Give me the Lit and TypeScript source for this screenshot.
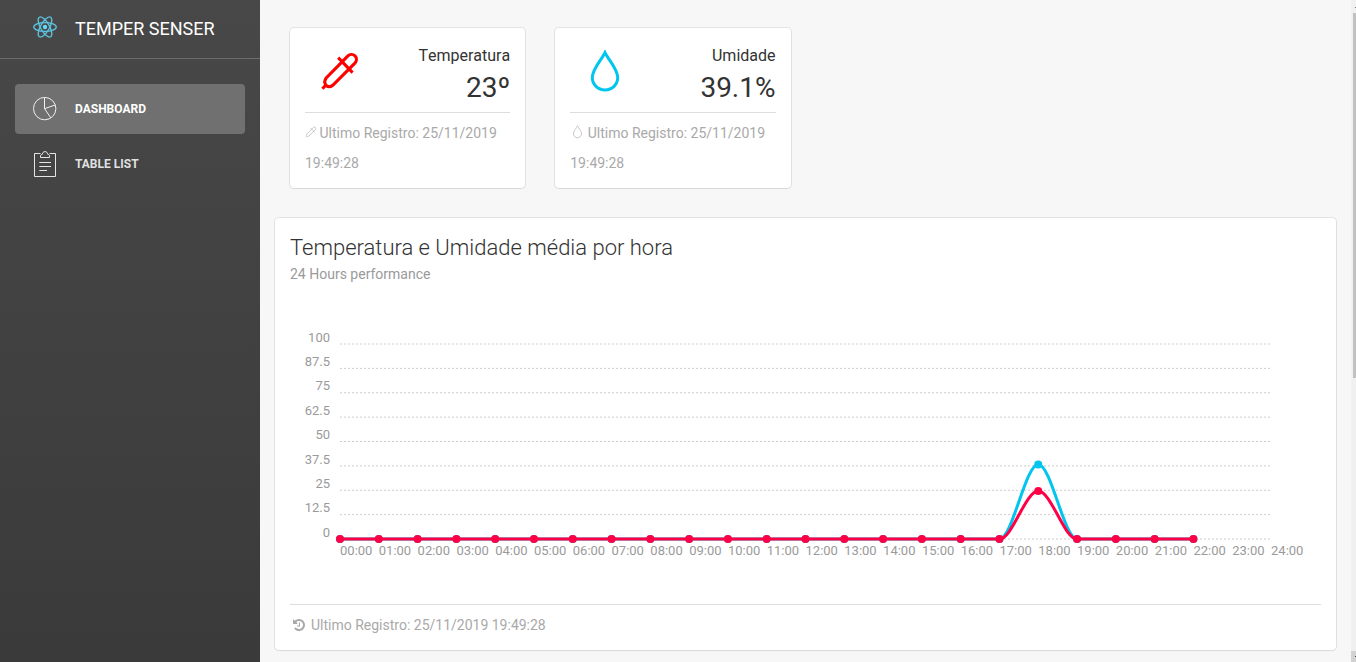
import { LitElement, html, css, svg } from "lit";
import { customElement, property } from "lit/decorators.js";

const STAMP = "Ultimo Registro: 25/11/2019 19:49:28";

const eyedropper = (stroke: number) => svg`
  <g fill="none" stroke="currentColor" stroke-width=${stroke} stroke-linecap="butt">
    <path d="M2.4 37.8 5.6 34.4"/>
    <path d="M6.2 34.4C4.6 32.6 4.3 29.6 6.2 27L27.7 5.2C29.8 3 33 3 35 4.9C37 6.9 36.9 10 34.9 12.1L13 34C10.6 36 8 36.2 6.2 34.4Z"/>
    <path d="M18.2 6.6 32.6 21.6"/>
  </g>`;

const drop = (stroke: number) => svg`
  <path fill="none" stroke="currentColor" stroke-width=${stroke}
    d="M20 2.6C17.2 9 7.3 18.8 7.3 27.6C7.3 34.6 12.9 40 20 40S32.7 34.6 32.7 27.6C32.7 18.8 22.8 9 20 2.6Z"/>`;

@customElement("stat-card")
class StatCard extends LitElement {
  @property() kind = "temp";
  @property() label = "";
  @property() value = "";

  static styles = css`
    :host { display: block; }
    .card {
      height: 160px;
      box-sizing: border-box;
      padding: 15px 15px 0;
      background: #fff;
      border-radius: 4px;
      box-shadow: 0 1px 2px rgba(0, 0, 0, 0.05), 0 0 0 1px rgba(63, 63, 68, 0.1);
    }
    .top { display: flex; justify-content: space-between; height: 69px; }
    .big { width: 40px; height: 44px; margin: 7px 0 0 15px; }
    .big.temp { margin-top: 8px; }
    .temp { color: #f00; }
    .hum { color: #00c5ee; }
    .nums { text-align: right; color: #333; }
    .label { font-size: 16px; line-height: 24px; padding-top: 1px; font-kerning: none; }
    .value { font-size: 28px; line-height: 36px; padding-top: 2px; }
    .foot {
      border-top: 1px solid #ddd;
      padding-top: 5px;
      font-size: 14px;
      line-height: 30px;
      color: #a9a9a9;
    }
    .small { width: 12px; height: 13px; margin-right: 2.5px; vertical-align: -1px; }
    .small.drop { margin: 0 3.5px 0 1px; width: 13px; height: 14px; }
  `;

  render() {
    const temp = this.kind === "temp";
    return html`<div class="card">
      <div class="top">
        <svg class="big ${temp ? "temp" : "hum"}" viewBox="0 0 40 44">${temp ? eyedropper(3.1) : drop(3)}</svg>
        <div class="nums">
          <div class="label">${this.label}</div>
          <div class="value">${this.value}</div>
        </div>
      </div>
      <div class="foot">
        <svg class="small ${temp ? "" : "drop"}" viewBox="0 0 40 44">${temp ? eyedropper(2) : drop(2)}</svg>${STAMP}
      </div>
    </div>`;
  }
}

@customElement("hour-chart")
class HourChart extends LitElement {
  static styles = css`
    :host { display: block; }
    .plot { display: block; width: 1031px; height: 245px; }
    .tick { font-size: 13px; fill: #9a9a9a; }
    .grid { stroke: rgba(0, 0, 0, 0.2); stroke-width: 1; stroke-dasharray: 2 2; }
    .line { fill: none; stroke-width: 3; }
  `;

  private x0 = 50;
  private dx = 931 / 24;
  private yBase = 210;
  private height = 195;

  private series(values: number[], color: string) {
    const pts = values.map((v, i) => [this.x0 + i * this.dx, this.yBase - (v / 100) * this.height]);
    const third = this.dx / 3;
    const d = pts
      .map(([x, y], i) =>
        i === 0 ? `M${x},${y}` : `C${pts[i - 1][0] + third},${pts[i - 1][1]},${x - third},${y},${x},${y}`
      )
      .join("");
    return svg`
      <path class="line" stroke=${color} d=${d}/>
      ${pts.map(([x, y]) => svg`<circle cx=${x} cy=${y} r="4" fill=${color}/>`)}`;
  }

  render() {
    const hours = Array.from({ length: 25 }, (_, i) => i);
    const levels = Array.from({ length: 9 }, (_, i) => i);
    const data = (peak: number) => Array.from({ length: 23 }, (_, i) => (i === 18 ? peak : 0));
    const step = this.height / 8;
    return html`<svg class="plot" viewBox="0 0 1031 245">
      ${levels.map(
        (i) => svg`
          <line class="grid" x1="50" x2="981" y1=${15 + i * step} y2=${15 + i * step}/>
          <text class="tick" text-anchor="end" x="40" y=${Math.floor(13.2 + i * step)}>${100 - i * 12.5}</text>`
      )}
      ${hours.map(
        (h) => svg`<text class="tick" x=${this.x0 + h * this.dx} y="226">${String(h).padStart(2, "0")}:00</text>`
      )}
      ${this.series(data(38.2), "#00c5ee")}
      ${this.series(data(24.6), "#ff0046")}
    </svg>`;
  }
}

@customElement("app-root")
class AppRoot extends LitElement {
  static styles = css`
    :host {
      display: flex;
      height: 662px;
      overflow: hidden;
      font-family: Roboto, "Liberation Sans", sans-serif;
      background: #f7f7f7;
    }
    .sidebar { flex: 0 0 260px; background: linear-gradient(#484848, #3a3a3a); color: #fff; }
    .brand {
      display: flex;
      align-items: center;
      height: 58px;
      border-bottom: 1px solid #6c6c6c;
      font-size: 18px;
    }
    .logo { width: 30px; height: 30px; margin: 0 15px 4px 30px; }
    .name { padding-bottom: 2px; }
    .nav { padding: 25px 15px 0; display: flex; flex-direction: column; gap: 5px; }
    .item {
      display: flex;
      align-items: center;
      height: 50px;
      border-radius: 4px;
      font-size: 12px;
      font-weight: 700;
      color: rgba(255, 255, 255, 0.86);
    }
    .item.active { background: rgba(255, 255, 255, 0.23); color: #fff; }
    .glyph { width: 30px; height: 30px; margin: 0 15px; }
    .main { flex: 0 0 1061px; padding: 28px 15px 0; }
    .cards { display: grid; grid-template-columns: repeat(4, 1fr); margin-bottom: 30px; }
    .cell { padding: 0 15px; }
    .panel {
      box-sizing: border-box;
      height: 432px;
      padding: 0 15px;
      background: #fff;
      border-radius: 4px;
      box-shadow: 0 1px 2px rgba(0, 0, 0, 0.05), 0 0 0 1px rgba(63, 63, 68, 0.1);
    }
    .title { margin: 0; padding-top: 15px; font-size: 22px; font-weight: 300; line-height: 30px; color: #333; }
    .sub { font-size: 14px; line-height: 22px; color: #9a9a9a; margin-bottom: 44px; }
    .foot {
      display: flex;
      align-items: center;
      margin-top: 30px;
      height: 39px;
      border-top: 1px solid #ddd;
      font-size: 14px;
      color: #a9a9a9;
    }
    .history { width: 12px; height: 12px; margin: 0 6px 0 3px; }
    .scroll { flex: 0 0 5px; display: flex; flex-direction: column; background: #f0f0f0; }
    .up { height: 13px; display: flex; justify-content: flex-end; }
    .tip { width: 1px; height: 1px; margin-top: 7px; background: #777; }
    .thumb { height: 365px; margin-left: 2px; background: #c1c1c1; }
    .down { height: 11px; margin-top: auto; background: #d2d2d2; display: flex; justify-content: flex-end; }
    .down .tip { margin-top: 5px; background: #444; }
  `;

  render() {
    return html`
      <div class="sidebar">
        <div class="brand">
          <svg class="logo" viewBox="-15 -15 30 30">
            <g fill="none" stroke="#61dafb" stroke-width="1.3" opacity=".86">
              ${[0, 60, 120].map((a) => svg`<ellipse rx="11.3" ry="4.4" transform="rotate(${a})"/>`)}
            </g>
            <circle r="2.200" fill="#61dafb"/>
          </svg>
          <span class="name">TEMPER SENSER</span>
        </div>
        <div class="nav">
          <div class="item active">
            <svg class="glyph" viewBox="0 0 30 30" fill="none" stroke="currentColor" stroke-width="1" opacity=".9">
              <circle cx="14.7" cy="14.6" r="11.2"/>
              <path d="M14.5 3.5V14.7L20.8 23.8M14.5 14.7 25.2 11"/>
            </svg>
            <span>DASHBOARD</span>
          </div>
          <div class="item">
            <svg class="glyph" viewBox="0 0 30 30" fill="none" stroke="currentColor" stroke-width="1">
              <path d="M10.5 4.5H4.5V27.5H25.5V4.5H19.5"/>
              <path d="M10.5 8.5V7C10.5 5.7 11.3 5.5 12.3 5.3C12.5 3.6 13.5 2.6 15 2.6S17.5 3.6 17.7 5.3C18.7 5.5 19.5 5.7 19.5 7V8.5Z"/>
              <path d="M9.3 13.5H21M9.3 17.5H21M9.3 21.5H17"/>
            </svg>
            <span>TABLE LIST</span>
          </div>
        </div>
      </div>
      <div class="main">
        <div class="cards">
          <div class="cell"><stat-card kind="temp" label="Temperatura" value="23º"></stat-card></div>
          <div class="cell"><stat-card kind="hum" label="Umidade" value="39.1%"></stat-card></div>
        </div>
        <div class="panel">
          <h4 class="title">Temperatura e Umidade média por hora</h4>
          <div class="sub">24 Hours performance</div>
          <hour-chart></hour-chart>
          <div class="foot">
            <svg class="history" viewBox="0 0 1536 1536" fill="currentColor">
              <path d="M1536 768q0 156-61 298t-164 245-245 164-298 61q-172 0-327-72.500T177 1259q-7-10-6.500-22.500T179 1216l137-138q10-9 25-9 16 2 23 12 73 95 179 147t225 52q104 0 198.500-40.500T1130 1130t109.500-163.500T1280 768t-40.500-198.500T1130 406 966.500 296.500 768 256q-98 0-188 35.500T420 393l137 138q31 30 14 69-17 40-59 40H64q-26 0-45-19T0 576V128q0-42 40-59 39-17 69 14l130 129Q346 111 483.500 55.500T768 0q156 0 298 61t245 164 164 245 61 298zM896 480v448q0 14-9 23t-23 9H544q-14 0-23-9t-9-23v-64q0-14 9-23t23-9h224V480q0-14 9-23t23-9h64q14 0 23 9t9 23z"/>
            </svg>
            <span>${STAMP}</span>
          </div>
        </div>
      </div>
      <div class="scroll">
        <div class="up"><div class="tip"></div></div>
        <div class="thumb"></div>
        <div class="down"><div class="tip"></div></div>
      </div>
    `;
  }
}
